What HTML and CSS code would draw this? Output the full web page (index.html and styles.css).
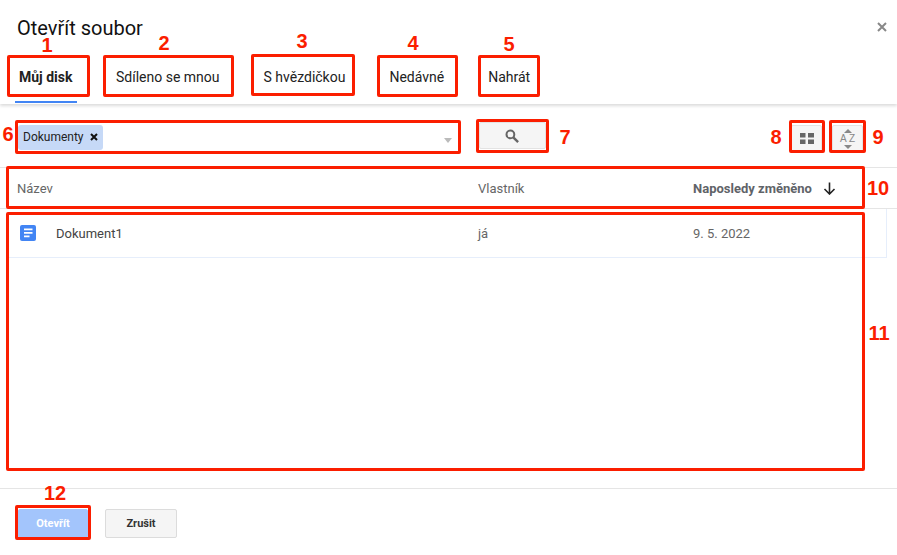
FILE: index.html
```html
<!DOCTYPE html>
<html lang="cs">
<head>
<meta charset="utf-8">
<title>Otevřít soubor</title>
<link rel="stylesheet" href="styles.css">
</head>
<body>
<div class="dialog">
  <header class="head">
    <div class="title-row">
      <h1 class="title">Otevřít soubor</h1>
      <svg class="close" width="10" height="10" viewBox="0 0 10 10"><path d="M1 1l8 8M9 1l-8 8" stroke="#888" stroke-width="2"/></svg>
    </div>
    <nav class="tabs">
      <div class="tab tab-active">Můj disk</div>
      <div class="tab">Sdíleno se mnou</div>
      <div class="tab">S hvězdičkou</div>
      <div class="tab">Nedávné</div>
      <div class="tab">Nahrát</div>
    </nav>
  </header>
  <section class="toolbar">
    <div class="searchbox">
      <span class="chip">Dokumenty<svg class="chip-x" width="8" height="8" viewBox="0 0 8 8"><path d="M1 1l6 6M7 1l-6 6" stroke="#111" stroke-width="2"/></svg></span>
      <span class="caret"></span>
    </div>
    <button class="btn btn-search"><svg width="14" height="14" viewBox="0 0 14 14"><circle cx="5.400" cy="5.400" r="3.900" fill="none" stroke="#666" stroke-width="2"/><path d="M8.300 8.300l4.800 4.800" stroke="#666" stroke-width="2.400"/></svg></button>
    <div class="spacer"></div>
    <button class="btn btn-icon"><svg width="14" height="11" viewBox="0 0 14 11"><path fill="#666" d="M0 0h5.500v4.500H0zM8 0h6v4.500H8zM0 6.500h5.500V11H0zM8 6.500h6V11H8z"/></svg></button>
    <button class="btn btn-icon btn-sort">
      <svg class="sort-arrow" width="8" height="4" viewBox="0 0 8 4"><path fill="#888" d="M4 0l4 4H0z"/></svg>
      <span class="az">A Z</span>
      <svg class="sort-arrow" width="8" height="4" viewBox="0 0 8 4"><path fill="#888" d="M0 0h8L4 4z"/></svg>
    </button>
  </section>
  <div class="thead cols">
    <span>Název</span>
    <span>Vlastník</span>
    <span class="sorted">Naposledy změněno<svg class="sort-dir" width="13" height="13" viewBox="0 0 13 13"><path d="M6.500 0.500v11M1.500 7L6.500 12l5-5" fill="none" stroke="#222" stroke-width="1.600"/></svg></span>
  </div>
  <main class="list">
    <div class="row cols">
      <span class="name"><svg class="doc" width="16" height="16" viewBox="0 0 16 16"><rect width="16" height="16" rx="2" fill="#4285f4"/><path fill="#fff" d="M4 3.500h8.500v1.800H4zM4 7h8.500v1.800H4zM4 10.500h5.500v1.800H4z"/></svg>Dokument1</span>
      <span>já</span>
      <span>9. 5. 2022</span>
    </div>
  </main>
  <footer class="foot">
    <button class="action action-primary">Otevřít</button>
    <button class="action">Zrušit</button>
  </footer>
</div>

<div class="mark m1"></div><div class="mark m2"></div><div class="mark m3"></div><div class="mark m4"></div>
<div class="mark m5"></div><div class="mark m6"></div><div class="mark m7"></div><div class="mark m8"></div>
<div class="mark m9"></div><div class="mark m10"></div><div class="mark m11"></div><div class="mark m12"></div>
<span class="num n1">1</span><span class="num n2">2</span><span class="num n3">3</span><span class="num n4">4</span>
<span class="num n5">5</span><span class="num n6">6</span><span class="num n7">7</span><span class="num n8">8</span>
<span class="num n9">9</span><span class="num n10">10</span><span class="num n11">11</span><span class="num n12">12</span>
</body>
</html>
```
FILE: styles.css
```css
* { box-sizing: border-box; }
html, body { margin: 0; height: 100%; background: #fff; overflow: hidden; }
body { position: relative; font-family: Roboto, "Liberation Sans", sans-serif; color: #333; }

.dialog { height: 555px; display: flex; flex-direction: column; }

.head { height: 104px; flex: none; box-shadow: 0 2px 3px rgba(0,0,0,.14); position: relative; display: flex; flex-direction: column; }
.title-row { display: flex; justify-content: space-between; align-items: flex-start; padding: 19px 10px 0 17px; height: 55px; flex: none; }
.title { margin: 0; font-size: 20px; line-height: 18px; font-weight: 400; color: #111; }
.close { margin-top: 3px; }
.tabs { display: flex; gap: 36px; padding-left: 15px; flex: 1; }
.tab { padding: 0 4px; font-size: 14px; line-height: 44px; color: #222; height: 48px; }
.tab-active { font-weight: 700; border-bottom: 2px solid #4285f4; width: 62px; margin-right: -1px; white-space: nowrap; }

.toolbar { display: flex; align-items: flex-start; height: 63px; flex: none; padding: 18px 34px 0 18px; }
.searchbox { width: 440px; height: 28px; padding-top: 3px; display: flex; justify-content: space-between; }
.chip { display: flex; align-items: center; width: 85px; height: 25px; padding: 0 0 1px 5px; background: #c6d9f7; border-radius: 3px; font-size: 12px; color: #222; }
.chip-x { margin-left: 6px; }
.caret { margin: 13px 6px 0 0; border: 4px solid transparent; border-top: 5px solid #bbb; border-bottom: 0; height: 5px; }
.btn { display: flex; flex-direction: column; align-items: center; justify-content: center; background: #f5f5f5; border: 1px solid #e3e3e3; border-radius: 2px; padding: 0; }
.btn-search { width: 67px; height: 27px; margin-left: 21px; padding: 1px 2px 0 0; }
.spacer { flex: 1; }
.btn-icon { width: 31px; height: 27px; margin-top: 3px; }
.btn-sort { margin-left: 10px; gap: 1px; }
.az { font-size: 10px; line-height: 10px; color: #888; }
.sort-arrow { display: block; }

.cols { display: grid; grid-template-columns: 461px 215px 1fr; align-items: center; font-size: 13px; color: #666; }
.thead { height: 42px; flex: none; padding-left: 17px; border-top: 1px solid #e5e5e5; border-bottom: 1px solid #e5e5e5; }
.sorted { display: flex; align-items: center; font-weight: 700; color: #5f6368; }
.sort-dir { margin-left: 11px; }

.list { flex: 1; padding: 0 10px 0 8px; }
.row { height: 49px; padding-left: 12px; grid-template-columns: 458px 215px 1fr; border: 1px solid #e6eefb; border-top: 0; border-left: 0; }
.name { display: flex; align-items: center; color: #444; }
.doc { margin-right: 20px; }

.foot { height: 67px; flex: none; border-top: 1px solid #e5e5e5; padding: 20px 0 0 18px; display: flex; align-items: flex-start; gap: 17px; }
.action { width: 72px; height: 29px; background: #f5f5f5; border: 1px solid #dcdcdc; border-radius: 2px; font: 700 11px Roboto, "Liberation Sans", sans-serif; color: #333; padding: 0; }
.action-primary { width: 70px; background: #a3c5fc; border-color: #a3c5fc; color: #fff; }

.mark { position: absolute; border: 3px solid #fb1e00; border-radius: 2px; }
.m1 { left: 7px; top: 55px; width: 83px; height: 42px; }
.m2 { left: 103px; top: 55px; width: 131px; height: 42px; }
.m3 { left: 251px; top: 54px; width: 104px; height: 42px; }
.m4 { left: 377px; top: 55px; width: 81px; height: 42px; }
.m5 { left: 478px; top: 55px; width: 62px; height: 42px; }
.m6 { left: 15px; top: 120px; width: 446px; height: 34px; }
.m7 { left: 476px; top: 119px; width: 73px; height: 34px; }
.m8 { left: 789px; top: 120px; width: 36px; height: 33px; }
.m9 { left: 829px; top: 120px; width: 37px; height: 33px; }
.m10 { left: 6px; top: 166px; width: 859px; height: 43px; }
.m11 { left: 6px; top: 212px; width: 859px; height: 259px; }
.m12 { left: 15px; top: 505px; width: 76px; height: 35px; }

.num { position: absolute; font: 700 20px/16px "Liberation Sans", Arial, sans-serif; color: #fb1e00; transform: translateX(-50%); }
.n1 { left: 47px; top: 37px; }
.n2 { left: 164px; top: 35px; }
.n3 { left: 302px; top: 33px; }
.n4 { left: 413px; top: 35px; }
.n5 { left: 509px; top: 36px; }
.n6 { left: 8px; top: 126px; }
.n7 { left: 565px; top: 129px; }
.n8 { left: 776px; top: 129px; }
.n9 { left: 878px; top: 129px; }
.n10 { left: 878px; top: 180px; }
.n11 { left: 879px; top: 325px; }
.n12 { left: 55px; top: 485px; }
```
